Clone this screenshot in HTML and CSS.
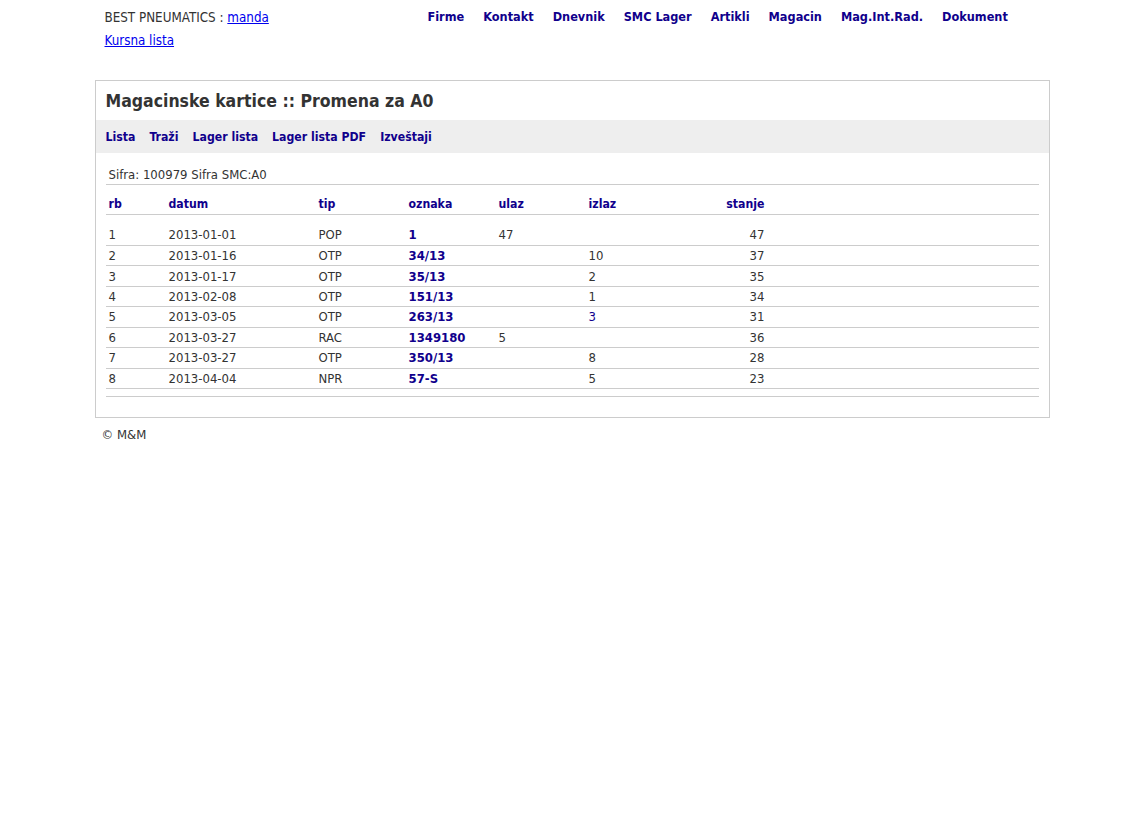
FILE: index.html
```html
<!DOCTYPE html>
<html lang="sr">
<head>
    <meta charset="UTF-8">
    <title>Magacinske kartice</title>
    <link rel="stylesheet" href="styles.css">
</head>
<body>
    <div id="wrapper">
        <div id="header">
            <div class="user">
                BEST PNEUMATICS : <a href="#">manda</a><br>
                <a href="#" class="kursna">Kursna lista</a>
            </div>
            <ul class="menu">
                <li><a href="#">Firme</a></li>
                <li><a href="#">Kontakt</a></li>
                <li><a href="#">Dnevnik</a></li>
                <li><a href="#">SMC Lager</a></li>
                <li><a href="#">Artikli</a></li>
                <li><a href="#">Magacin</a></li>
                <li><a href="#">Mag.Int.Rad.</a></li>
                <li><a href="#">Dokument</a></li>
            </ul>
        </div>

        <div id="content">
            <h2>Magacinske kartice :: Promena za A0</h2>
            <div class="submenu">
                <a href="#">Lista</a>
                <a href="#">Traži</a>
                <a href="#">Lager lista</a>
                <a href="#">Lager lista PDF</a>
                <a href="#">Izveštaji</a>
            </div>
            <div class="inner">
                <div class="sifra">Sifra: 100979 Sifra SMC:A0</div>
                <table class="kartica">
                    <tr class="head">
                        <th class="c-rb"><a href="#">rb</a></th>
                        <th class="c-datum"><a href="#">datum</a></th>
                        <th class="c-tip"><a href="#">tip</a></th>
                        <th class="c-oznaka"><a href="#">oznaka</a></th>
                        <th class="c-ulaz"><a href="#">ulaz</a></th>
                        <th class="c-izlaz"><a href="#">izlaz</a></th>
                        <th class="c-stanje"><a href="#">stanje</a></th>
                        <th></th>
                    </tr>
                    <tr class="first">
                        <td>1</td><td>2013-01-01</td><td>POP</td><td><a class="doc" href="#">1</a></td><td>47</td><td></td><td class="num">47</td><td></td>
                    </tr>
                    <tr>
                        <td>2</td><td>2013-01-16</td><td>OTP</td><td><a class="doc" href="#">34/13</a></td><td></td><td>10</td><td class="num">37</td><td></td>
                    </tr>
                    <tr>
                        <td>3</td><td>2013-01-17</td><td>OTP</td><td><a class="doc" href="#">35/13</a></td><td></td><td>2</td><td class="num">35</td><td></td>
                    </tr>
                    <tr>
                        <td>4</td><td>2013-02-08</td><td>OTP</td><td><a class="doc" href="#">151/13</a></td><td></td><td>1</td><td class="num">34</td><td></td>
                    </tr>
                    <tr>
                        <td>5</td><td>2013-03-05</td><td>OTP</td><td><a class="doc" href="#">263/13</a></td><td></td><td><a class="plain" href="#">3</a></td><td class="num">31</td><td></td>
                    </tr>
                    <tr>
                        <td>6</td><td>2013-03-27</td><td>RAC</td><td><a class="doc" href="#">1349180</a></td><td>5</td><td></td><td class="num">36</td><td></td>
                    </tr>
                    <tr>
                        <td>7</td><td>2013-03-27</td><td>OTP</td><td><a class="doc" href="#">350/13</a></td><td></td><td>8</td><td class="num">28</td><td></td>
                    </tr>
                    <tr>
                        <td>8</td><td>2013-04-04</td><td>NPR</td><td><a class="doc" href="#">57-S</a></td><td></td><td>5</td><td class="num">23</td><td></td>
                    </tr>
                    <tr class="foot">
                        <td colspan="8"></td>
                    </tr>
                </table>
            </div>
        </div>

        <div id="footer">&copy; M&amp;M</div>
    </div>
</body>
</html>
```

FILE: styles.css
```css
body {
    margin: 8px;
    font-family: "DejaVu Sans Condensed", "DejaVu Sans", sans-serif;
    font-size: 13px;
    color: #333333;
    background: #ffffff;
}
#wrapper {
    width: 955px;
    margin: 0 auto;
}
a {
    color: #10008c;
    text-decoration: none;
}
#header {
    display: flex;
    height: 72px;
}
.user {
    width: 323px;
    padding-left: 10px;
    font-size: 13.3px;
    line-height: 23px;
    margin-top: -2px;
}
.user a {
    color: #0000ee;
    text-decoration: underline;
}
.menu {
    display: flex;
    gap: 19px;
    list-style: none;
    margin: 0;
    padding: 0;
    line-height: 18px;
}
.menu li {
    white-space: nowrap;
}
.menu a {
    font-weight: bold;
    font-size: 12.6px;
}
#content {
    border: 1px solid #cccccc;
    padding-bottom: 20px;
}
#content h2 {
    margin: 0;
    padding: 0 10px;
    height: 39px;
    line-height: 40px;
    font-size: 17.5px;
    color: #333333;
}
.submenu {
    background: #eeeeee;
    height: 33px;
    line-height: 35px;
    padding: 0 10px;
    display: flex;
    gap: 14px;
}
.submenu a {
    font-weight: bold;
    font-size: 12.2px;
}
.inner {
    padding: 10px 10px 0 10px;
}
.sifra {
    padding: 0 3px;
    height: 21px;
    line-height: 23px;
    border-bottom: 1px solid #cccccc;
}
.kartica {
    width: 100%;
    border-collapse: collapse;
}
.kartica th,
.kartica td {
    text-align: left;
    padding: 0 3px;
    border-bottom: 1px solid #cccccc;
    line-height: 16px;
}
.kartica th {
    height: 20px;
    padding-top: 9px;
    font-size: 12.2px;
    font-weight: bold;
}
.kartica td {
    height: 18.43px;
    padding-top: 1px;
}
.kartica tr.first td {
    height: 21px;
    padding-top: 9px;
}
.kartica tr.foot td {
    height: 7px;
    padding: 0;
}
.c-rb { width: 54px; }
.c-datum { width: 144px; }
.c-tip { width: 84px; }
.c-oznaka { width: 84px; }
.c-ulaz { width: 84px; }
.c-izlaz { width: 84px; }
.c-stanje { width: 86px; }
.kartica th.c-stanje,
.kartica td.num {
    text-align: right;
}
.doc {
    font-weight: bold;
    font-size: 13px;
}
#footer {
    padding: 9px 7px;
}
```
